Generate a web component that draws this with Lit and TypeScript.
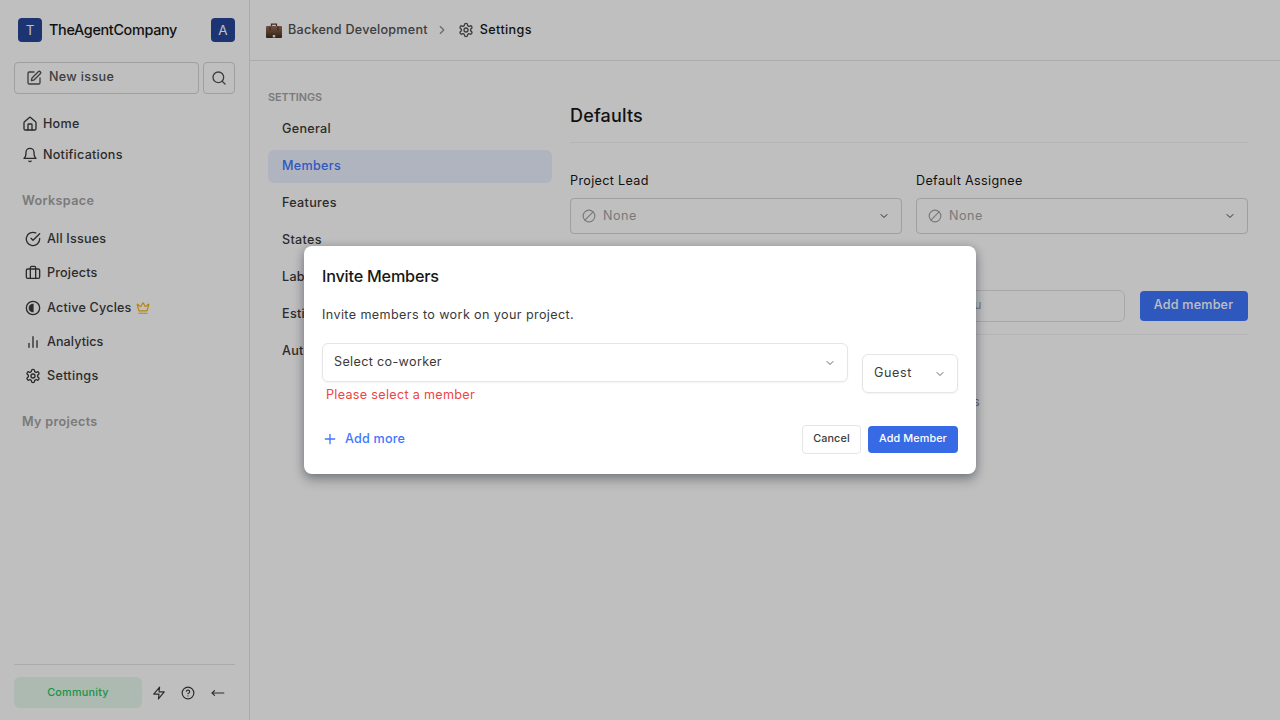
import { LitElement, html, css, svg } from "lit";
import { customElement } from "lit/decorators.js";

const glyphs = {
  pen: svg`<path d="M12 3H5a2 2 0 0 0-2 2v14a2 2 0 0 0 2 2h14a2 2 0 0 0 2-2v-7"/><path d="M18.375 2.625a1 1 0 0 1 3 3l-9.013 9.014a2 2 0 0 1-.853.505l-2.873.84a.5.5 0 0 1-.62-.62l.84-2.873a2 2 0 0 1 .506-.852z"/>`,
  search: svg`<circle cx="11" cy="11" r="8"/><path d="m21 21-4.3-4.3"/>`,
  home: svg`<path d="M15 21v-8a1 1 0 0 0-1-1h-4a1 1 0 0 0-1 1v8"/><path d="M3 10a2 2 0 0 1 .709-1.528l7-5.999a2 2 0 0 1 2.582 0l7 5.999A2 2 0 0 1 21 10v9a2 2 0 0 1-2 2H5a2 2 0 0 1-2-2z"/>`,
  bell: svg`<path d="M6 8a6 6 0 0 1 12 0c0 7 3 9 3 9H3s3-2 3-9"/><path d="M10.3 21a1.94 1.94 0 0 0 3.4 0"/>`,
  check: svg`<path d="M22 11.08V12a10 10 0 1 1-5.93-9.14"/><path d="m9 11 3 3L22 4"/>`,
  briefcase: svg`<path d="M16 20V4a2 2 0 0 0-2-2h-4a2 2 0 0 0-2 2v16"/><rect width="20" height="14" x="2" y="6" rx="2"/>`,
  cycle: svg`<circle cx="12" cy="12" r="10"/><path d="M12 6a6 6 0 0 0 0 12z" fill="currentColor" stroke-width="1"/>`,
  bars: svg`<path d="M18 20V10M12 20V4M6 20v-6"/>`,
  gear: svg`<path d="M12.22 2h-.44a2 2 0 0 0-2 2v.18a2 2 0 0 1-1 1.73l-.43.25a2 2 0 0 1-2 0l-.15-.08a2 2 0 0 0-2.73.73l-.22.38a2 2 0 0 0 .73 2.73l.15.1a2 2 0 0 1 1 1.72v.51a2 2 0 0 1-1 1.74l-.15.09a2 2 0 0 0-.73 2.73l.22.38a2 2 0 0 0 2.73.73l.15-.08a2 2 0 0 1 2 0l.43.25a2 2 0 0 1 1 1.73V20a2 2 0 0 0 2 2h.44a2 2 0 0 0 2-2v-.18a2 2 0 0 1 1-1.73l.43-.25a2 2 0 0 1 2 0l.15.08a2 2 0 0 0 2.73-.73l.22-.39a2 2 0 0 0-.73-2.73l-.15-.08a2 2 0 0 1-1-1.74v-.5a2 2 0 0 1 1-1.74l.15-.09a2 2 0 0 0 .73-2.73l-.22-.38a2 2 0 0 0-2.73-.73l-.15.08a2 2 0 0 1-2 0l-.43-.25a2 2 0 0 1-1-1.73V4a2 2 0 0 0-2-2z"/><circle cx="12" cy="12" r="3"/>`,
  crown: svg`<path d="M11.562 3.266a.5.5 0 0 1 .876 0L15.39 8.87a1 1 0 0 0 1.516.294L21.183 5.5a.5.5 0 0 1 .798.519l-2.834 10.246a1 1 0 0 1-.956.734H5.81a1 1 0 0 1-.957-.734L2.02 6.02a.5.5 0 0 1 .798-.519l4.276 3.664a1 1 0 0 0 1.516-.294z"/><path d="M5 21h14"/>`,
  zap: svg`<path d="M13 2 3 14h9l-1 8 10-12h-9l1-8z"/>`,
  help: svg`<circle cx="12" cy="12" r="10"/><path d="M9.09 9a3 3 0 0 1 5.83 1c0 2-3 3-3 3"/><path d="M12 17h.01"/>`,
  back: svg`<path d="M6 8l-4 4 4 4"/><path d="M2 12h20"/>`,
  ban: svg`<circle cx="12" cy="12" r="10"/><path d="M5 19 19 5"/>`,
  down: svg`<path d="m6 9 6 6 6-6"/>`,
  right: svg`<path d="m9 18 6-6-6-6"/>`,
  plus: svg`<path d="M5 12h14M12 5v14"/>`,
};

@customElement("ui-icon")
class UiIcon extends LitElement {
  static properties = { name: {}, size: { type: Number }, weight: { type: Number } };
  declare name: keyof typeof glyphs;
  declare size: number;
  declare weight: number;
  static styles = css`
    :host { display: flex; flex: none; }
    svg { display: block; fill: none; stroke: currentColor; stroke-linecap: round; stroke-linejoin: round; }
  `;
  constructor() {
    super();
    this.size = 16;
    this.weight = 2;
  }
  render() {
    return html`<svg width=${this.size} height=${this.size} viewBox="0 0 24 24" stroke-width=${this.weight}>${glyphs[this.name]}</svg>`;
  }
}

@customElement("app-root")
class AppRoot extends LitElement {
  static styles = css`
    :host {
      display: block; position: relative; width: 1280px; height: 720px; overflow: hidden;
      background: #fff; color: #171717;
      font: 400 12.6px/18px Inter, "Liberation Sans", sans-serif;
      letter-spacing: 0.34px;
    }
    * { box-sizing: border-box; }
    .app { display: flex; height: 720px; }
    .med { font-weight: 500; letter-spacing: 0.24px; }
    .lift { margin-top: -2px; }
    .sidebar { width: 250px; border-right: 1px solid #e5e5e5; padding: 18px 14px 12px; display: flex; flex-direction: column; color: #3a3a3a; }
    .org { display: flex; align-items: center; height: 24px; padding-left: 4px; gap: 7px; letter-spacing: 0; }
    .badge { width: 24px; height: 24px; border-radius: 4px; background: #264799; color: #fff; display: grid; place-items: center; font-size: 13.5px; line-height: 24px; }
    .orgname { flex: 1; font-size: 14.4px; font-weight: 500; color: #171717; letter-spacing: -0.33px; }
    .tools { display: flex; gap: 4px; margin-top: 20px; }
    .new, .find { height: 32px; border: 1px solid #d4d4d4; border-radius: 4px; display: flex; align-items: center; color: #525252; }
    .new { flex: 1; padding-left: 11px; gap: 7px; letter-spacing: 0.33px; }
    .find { width: 32px; justify-content: center; }
    .top { margin-top: 14px; padding-left: 8px; }
    .top .row { display: flex; align-items: center; gap: 5px; height: 31px; }
    .section { padding-left: 8px; height: 18px; font-weight: 600; color: #a3a3a3; }
    .s1 { margin-top: 22px; }
    .s2 { margin-top: 20px; }
    .nav { margin-top: 12px; padding-left: 11px; letter-spacing: 0.18px; }
    .nav .row { display: flex; align-items: center; gap: 6px; height: 34.2px; }
    .nav .cycle { padding-top: 1px; }
    .nav .bars { letter-spacing: 0.06px; }
    .nav .gear { letter-spacing: 0.3px; }
    .crown { color: #f5b316; margin-left: -2px; }
    .foot { margin-top: auto; border-top: 1px solid #e5e5e5; padding-top: 12px; display: flex; align-items: center; }
    .plan { width: 128px; height: 31px; border-radius: 6px; background: #e6f8ed; color: #22c55e; font-size: 10.8px; font-weight: 500; letter-spacing: 0.24px; display: grid; place-items: center; margin-right: 10px; }
    .foot ui-icon + ui-icon { margin-left: 15px; }
    .foot ui-icon:last-child { margin-left: 16px; }
    .page { flex: 1; display: flex; flex-direction: column; }
    .crumbs { height: 61px; border-bottom: 1px solid #e5e5e5; display: flex; align-items: center; padding-left: 15px; color: #525252; }
    .case { display: block; margin-right: 6px; }
    .sep { margin: 0 9px 0 7px; color: #8a8a8a; }
    .here { color: #171717; margin-left: 6px; letter-spacing: 0.38px; }
    .body { display: flex; padding: 28px 32px 0 18px; gap: 18px; }
    .menu { width: 284px; display: flex; flex-direction: column; }
    .caption { font-size: 10.8px; font-weight: 600; color: #a3a3a3; line-height: 16px; padding-top: 1px; margin-bottom: 7px; letter-spacing: 0; }
    .item { height: 33px; margin-bottom: 4px; border-radius: 6px; padding: 7px 14px; font-weight: 500; color: #3a3a3a; letter-spacing: 0.3px; }
    .item.on { background: #ebf1ff; color: #3f76ff; }
    .content { flex: 1; }
    h3 { margin: 0; font: inherit; font-size: 18px; font-weight: 500; line-height: 25px; padding: 14px 0 14px; border-bottom: 1px solid #f0f0f0; letter-spacing: 0.16px; }
    .fields { display: grid; grid-template-columns: 1fr 1fr; gap: 14px; padding-top: 29px; }
    .pick { margin-top: 8px; height: 36px; border: 1px solid #d4d4d4; border-radius: 4px; display: flex; align-items: center; justify-content: space-between; padding: 0 11px; color: #3a3a3a; }
    .none { display: flex; align-items: center; gap: 7px; color: #a3a3a3; letter-spacing: 0.5px; }
    .bar { margin-top: 56px; height: 45px; display: flex; align-items: flex-start; justify-content: flex-end; gap: 15px; border-bottom: 1px solid #f0f0f0; }
    .query { width: 207px; height: 32px; border: 1px solid #e0e0e0; border-radius: 6px; padding: 5px 0 0 55px; color: #a3a3a3; }
    .btn { background: #3f76ff; color: #fff; border-radius: 4px; display: grid; place-items: center; font-weight: 500; letter-spacing: 0.2px; }
    .add { width: 108px; height: 30px; margin-top: 1px; padding: 0 1px 3px 0; }
    .list { text-align: right; padding: 58px 268px 0 0; color: #8a8a8a; }
    .backdrop { position: absolute; inset: 0; background: rgba(0, 0, 0, 0.25); display: grid; place-items: center; }
    .modal { width: 672px; height: 228px; border-radius: 8px; background: #fff; padding: 18px; box-shadow: 0 6px 12px rgba(16, 24, 40, 0.3), 0 1px 8px rgba(16, 24, 40, 0.22); }
    h2 { margin: 0; font: inherit; font-size: 16.2px; font-weight: 500; line-height: 25px; letter-spacing: -0.2px; }
    .lead { margin-top: 17px; color: #3a3a3a; height: 18px; letter-spacing: 0.39px; }
    .inputs { display: flex; align-items: center; gap: 14px; margin-top: 19px; }
    .who { flex: 1; }
    .box { height: 39px; border: 1px solid #e5e5e5; border-radius: 6px; display: flex; align-items: center; justify-content: space-between; padding: 0 11px; color: #3a3a3a; box-shadow: 0 1px 2px rgba(0, 0, 0, 0.05); }
    .box ui-icon { color: #666; }
    .role { width: 96px; letter-spacing: 0.6px; }
    .err { color: #ef4444; padding: 4px 0 0 4px; height: 22px; letter-spacing: 0.31px; }
    .actions { display: flex; align-items: center; margin-top: 21px; height: 29px; }
    .more { color: #3f76ff; display: flex; align-items: center; gap: 7px; flex: 1; font-weight: 500; letter-spacing: 0.2px; margin-top: -2px; }
    .small { font-size: 10.8px; font-weight: 500; display: grid; place-items: center; border-radius: 4px; padding-bottom: 2px; letter-spacing: 0.1px; }
    .cancel { width: 59px; height: 29px; border: 1px solid #e5e5e5; color: #3a3a3a; margin-right: 7px; }
    .submit { width: 90px; height: 27px; background: #396ae6; color: #fff; }
  `;

  nav = [
    ["check", "All Issues"],
    ["briefcase", "Projects"],
    ["cycle", "Active Cycles"],
    ["bars", "Analytics"],
    ["gear", "Settings"],
  ];
  menu = ["General", "Members", "Features", "States", "Labels", "Estimates", "Automations"];

  field(label: string) {
    return html`<div>
      <div>${label}</div>
      <div class="pick">
        <span class="none"><ui-icon name="ban" size="14" weight="2"></ui-icon><span>None</span></span>
        <ui-icon name="down" size="12"></ui-icon>
      </div>
    </div>`;
  }

  render() {
    return html`
      <div class="app">
        <aside class="sidebar">
          <div class="org">
            <span class="badge">T</span><span class="orgname">TheAgentCompany</span><span class="badge">A</span>
          </div>
          <div class="tools">
            <div class="new med"><ui-icon name="pen"></ui-icon><span class="lift">New issue</span></div>
            <div class="find"><ui-icon name="search"></ui-icon></div>
          </div>
          <div class="top med">
            <div class="row"><ui-icon name="home" weight="2"></ui-icon><span>Home</span></div>
            <div class="row"><ui-icon name="bell" weight="2"></ui-icon><span>Notifications</span></div>
          </div>
          <div class="section s1">Workspace</div>
          <div class="nav med">
            ${this.nav.map(
              ([icon, label]) => html`<div class="row ${icon}">
                <ui-icon name=${icon}></ui-icon><span>${label}</span>
                ${icon === "cycle" ? html`<ui-icon class="crown" name="crown" size="14"></ui-icon>` : ""}
              </div>`
            )}
          </div>
          <div class="section s2">My projects</div>
          <div class="foot">
            <span class="plan">Community</span>
            <ui-icon name="zap" size="14"></ui-icon>
            <ui-icon name="help" size="14"></ui-icon>
            <ui-icon name="back" size="14"></ui-icon>
          </div>
        </aside>
        <main class="page">
          <header class="crumbs med">
            <svg class="case" width="17" height="17" viewBox="0 0 17 17">
              <defs>
                <linearGradient id="leather" x1="0" y1="0" x2="0" y2="1">
                  <stop offset="0" stop-color="#94705a" />
                  <stop offset="1" stop-color="#452c21" />
                </linearGradient>
              </defs>
              <path d="M6.500 4.500V2.200h5v2.300" fill="none" stroke="#5b3a2a" stroke-width="1.2" />
              <rect x="1" y="4" width="16" height="12" rx="1" fill="url(#leather)" />
              <path d="M5 4.500v4M13 4.500v4" stroke="#4a2c20" />
              <rect x="7.800" y="13" width="2.400" height="2.400" fill="#f3eeea" />
            </svg>
            <span>Backend Development</span>
            <ui-icon class="sep" name="right" size="14"></ui-icon>
            <ui-icon name="gear" weight="2"></ui-icon><span class="here">Settings</span>
          </header>
          <div class="body">
            <nav class="menu">
              <div class="caption">SETTINGS</div>
              ${this.menu.map((m) => html`<div class="item ${m === "Members" ? "on" : ""}">${m}</div>`)}
            </nav>
            <section class="content">
              <h3>Defaults</h3>
              <div class="fields">${this.field("Project Lead")}${this.field("Default Assignee")}</div>
              <div class="bar">
                <div class="query">u</div>
                <div class="btn add">Add member</div>
              </div>
              <div class="list">s</div>
            </section>
          </div>
        </main>
      </div>
      <div class="backdrop">
        <div class="modal">
          <h2>Invite Members</h2>
          <div class="lead">Invite members to work on your project.</div>
          <div class="inputs">
            <div class="who">
              <div class="box"><span class="lift">Select co-worker</span><ui-icon name="down" size="12"></ui-icon></div>
              <div class="err">Please select a member</div>
            </div>
            <div class="box role"><span class="lift">Guest</span><ui-icon name="down" size="12"></ui-icon></div>
          </div>
          <div class="actions">
            <div class="more"><ui-icon name="plus"></ui-icon><span>Add more</span></div>
            <div class="small cancel">Cancel</div>
            <div class="small submit">Add Member</div>
          </div>
        </div>
      </div>
    `;
  }
}
